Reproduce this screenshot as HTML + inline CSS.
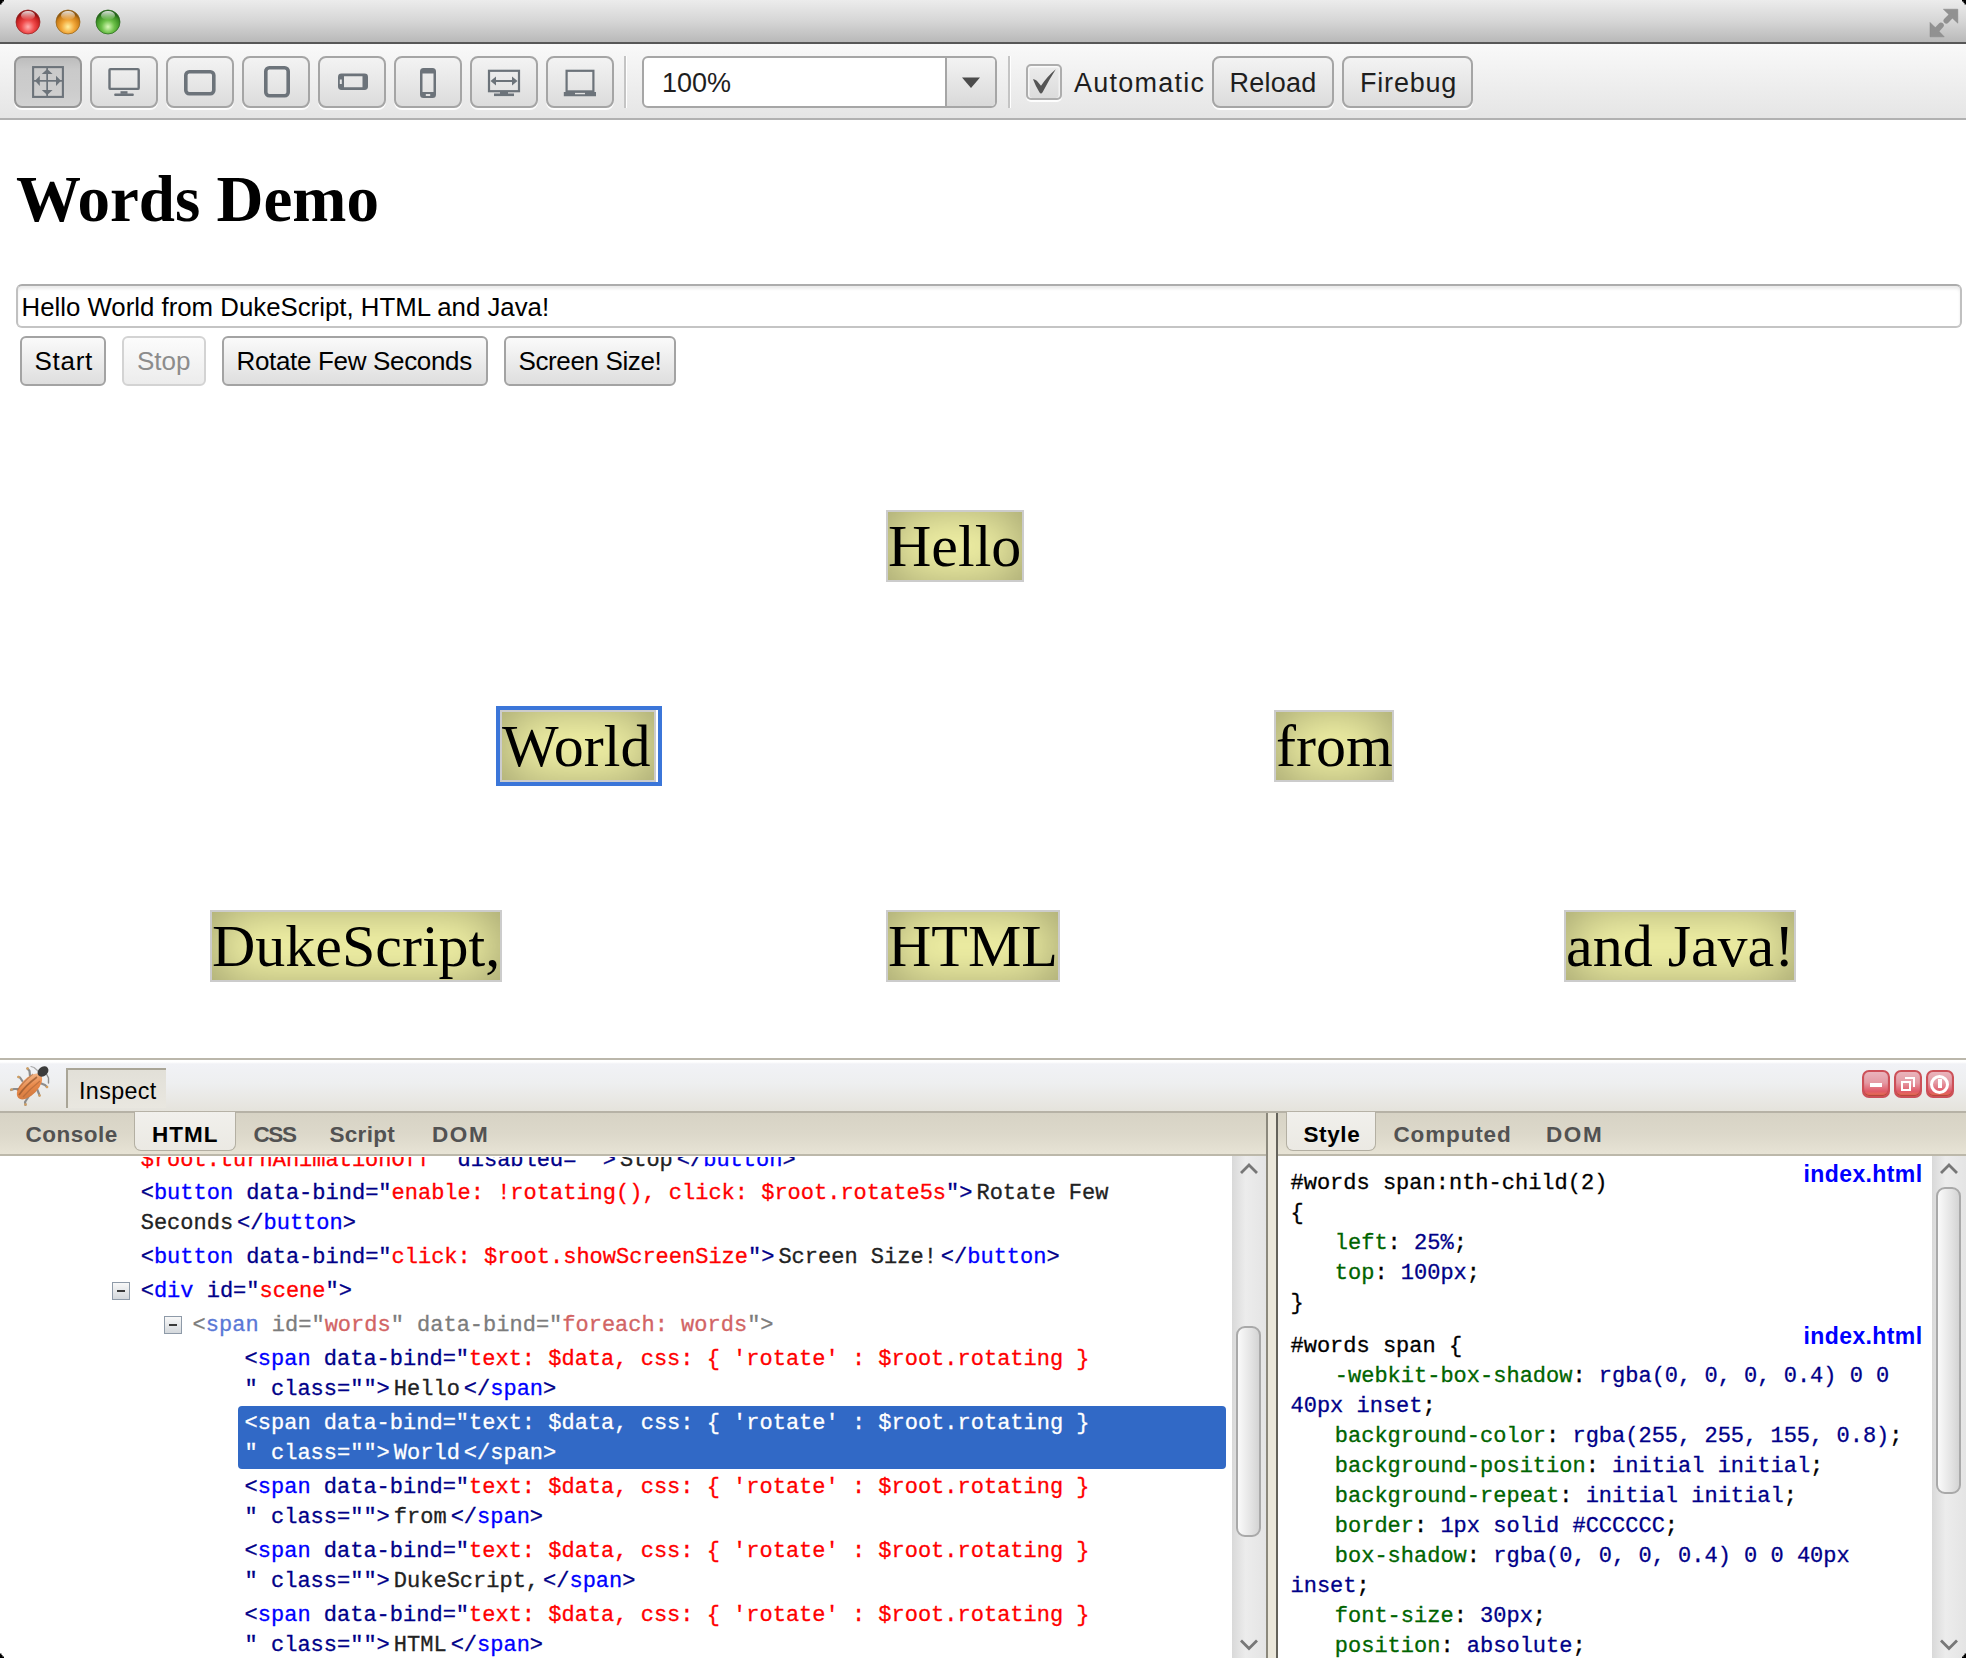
<!DOCTYPE html>
<html><head><meta charset="utf-8">
<style>
*{box-sizing:border-box;margin:0;padding:0}
html,body{width:1966px;height:1658px;overflow:hidden;background:#fff;font-family:"Liberation Sans",sans-serif;position:relative}
.a{position:absolute}
.t{position:absolute;white-space:pre;line-height:1}
/* title bar */
#title{left:0;top:0;width:1966px;height:42px;background:linear-gradient(#ececec,#d6d6d6 50%,#b9b9b9)}
#titleline{left:0;top:42px;width:1966px;height:2px;background:#575757}
.light{position:absolute;top:10px;width:24px;height:24px;border-radius:50%}
#toolbar{left:0;top:44px;width:1966px;height:74px;background:linear-gradient(#f9f9f9,#e5e5e5)}
#tbline{left:0;top:118px;width:1966px;height:2px;background:#b1b1b1}
.tbtn{position:absolute;top:56px;width:68px;height:52px;border:2px solid #a5a5a5;border-radius:8px;background:linear-gradient(#f3f3f3,#dcdcdc);box-shadow:0 2px 0 rgba(255,255,255,.9)}
.tbtn svg{position:absolute;left:0;top:0}
.tsep{position:absolute;top:56px;width:2px;height:52px;background:#c4c4c4;box-shadow:1px 0 0 #fff}
.tlab{font-size:27px;color:#1e1e1e}
/* page */
.pbtn{position:absolute;top:336px;height:50px;border:2px solid #a3a3a3;border-radius:6px;background:linear-gradient(#fafafa,#dedede)}
.ptxt{font-size:26px;color:#000}
.word{position:absolute;height:72px;border:2px solid #cccccc;background:rgba(255,255,155,.8);box-shadow:inset 0 0 56px rgba(0,0,0,.4);font-family:"Liberation Serif",serif;font-size:60px;line-height:68px;white-space:pre;color:#000}
/* firebug */
.mono{font-family:"Liberation Mono",monospace;font-size:22px;-webkit-text-stroke:.3px}
.tg{color:#0000ff}.br{color:#000088}.at{color:#000088}.vl{color:#ff0000}.tx{color:#222}
.pn{color:#006400}.pv{color:#000088}
.wh{color:#fff}.gbr{color:#7c7c7c}.gtg{color:#5a78d6}.gvl{color:#d26464}.sl{color:#000}
.tab{font-size:22.5px;font-weight:bold;color:#525252}
.rb{top:1070px;width:28px;height:28px;border-radius:7px;border:2px solid #cc5058;box-shadow:inset 0 -1px 1px rgba(120,30,30,.5);background:linear-gradient(#eab4bc,#e49aa4 45%,#e05a68 80%,#e87050)}
.sb{background:linear-gradient(90deg,#d9d9d9,#ececec 40%,#e4e4e4)}
.sth{border:2px solid #a9a9a9;border-radius:9px;background:linear-gradient(90deg,#fafafa,#e4e4e4 60%,#d4d4d4)}
.lnk{font-size:23px;font-weight:bold;color:#0000ff;letter-spacing:.28px}
</style></head><body>
<!-- title bar -->
<div class="a" id="title"></div>
<div class="a" id="titleline"></div>
<svg class="a" style="left:14px;top:8px" width="110" height="30" viewBox="0 0 110 30">
 <defs>
  <radialGradient id="gr" cx="50%" cy="70%" r="60%"><stop offset="0" stop-color="#ffb0b0"/><stop offset=".45" stop-color="#f04a4a"/><stop offset=".85" stop-color="#c41e1e"/><stop offset="1" stop-color="#8c1212"/></radialGradient>
  <radialGradient id="gy" cx="50%" cy="70%" r="60%"><stop offset="0" stop-color="#fff0a0"/><stop offset=".45" stop-color="#f2a83a"/><stop offset=".85" stop-color="#c87a14"/><stop offset="1" stop-color="#8a5510"/></radialGradient>
  <radialGradient id="gg" cx="50%" cy="70%" r="60%"><stop offset="0" stop-color="#d8f8b8"/><stop offset=".45" stop-color="#6cc048"/><stop offset=".85" stop-color="#3a8e22"/><stop offset="1" stop-color="#24601a"/></radialGradient>
  <linearGradient id="hl" x1="0" y1="0" x2="0" y2="1"><stop offset="0" stop-color="#fff" stop-opacity=".85"/><stop offset="1" stop-color="#fff" stop-opacity="0"/></linearGradient>
 </defs>
 <circle cx="14" cy="14" r="12" fill="url(#gr)" stroke="#9a2a2a" stroke-width=".8"/>
 <ellipse cx="14" cy="7.5" rx="7" ry="4.5" fill="url(#hl)"/>
 <circle cx="54" cy="14" r="12" fill="url(#gy)" stroke="#9a6a20" stroke-width=".8"/>
 <ellipse cx="54" cy="7.5" rx="7" ry="4.5" fill="url(#hl)"/>
 <circle cx="94" cy="14" r="12" fill="url(#gg)" stroke="#2e6e22" stroke-width=".8"/>
 <ellipse cx="94" cy="7.5" rx="7" ry="4.5" fill="url(#hl)"/>
</svg>
<svg class="a" style="left:0;top:0" width="6" height="6"><path d="M0 0 H4 V1.5 H2.5 V3 H1.5 V4.5 H0 Z" fill="#000"/></svg>
<svg class="a" style="left:1960px;top:0" width="6" height="6"><path d="M6 0 H2 V1.5 H3.5 V3 H4.5 V4.5 H6 Z" fill="#000"/></svg>
<svg class="a" style="left:1926px;top:6px" width="36" height="34" viewBox="0 0 36 34">
 <g fill="#919191" stroke="#858585" stroke-width=".5">
 <path d="M17.4 3.2 H31.8 V17.2 L27.3 13 L21.8 7.6 Z"/>
 <path d="M4 16.4 V30.8 H18.2 L13.9 26.2 L8.4 20.8 Z"/>
 </g>
 <g stroke="#919191" stroke-width="5.6" stroke-linecap="round"><path d="M24.6 10.4 L20.3 14.8"/><path d="M11.2 23.5 L15 19.4"/></g>
</svg>
<!-- toolbar -->
<div class="a" id="toolbar"></div>
<div class="a" id="tbline"></div>
<div class="tbtn" style="left:14px;background:linear-gradient(#bdbdbd,#cacaca 25%,#cdcdcd 70%,#d2d2d2);border-color:#979797"></div>
<div class="tbtn" style="left:90px"></div>
<div class="tbtn" style="left:166px"></div>
<div class="tbtn" style="left:242px"></div>
<div class="tbtn" style="left:318px"></div>
<div class="tbtn" style="left:394px"></div>
<div class="tbtn" style="left:470px"></div>
<div class="tbtn" style="left:546px"></div>
<svg class="a" style="left:0;top:0" width="640" height="120" viewBox="0 0 640 120" fill="#6c737a">
 <rect x="33.1" y="67.1" width="29.8" height="29.8" fill="none" stroke="#6c737a" stroke-width="2.1"/>
 <rect x="46.3" y="67" width="1.7" height="30"/><rect x="33" y="80" width="30" height="1.7"/>
 <path d="M47.2 69 L41.8 74 H52.6 Z M47.2 95 L41.8 90 H52.6 Z M35 80.8 L39.8 75.8 V86 Z M61 80.8 L56 75.8 V86 Z"/>
 <rect x="109.5" y="69.1" width="29.2" height="19.8" rx="1" fill="none" stroke="#6c737a" stroke-width="2.4"/>
 <rect x="120.5" y="91.2" width="7" height="2.6"/><rect x="114.2" y="93.6" width="19.6" height="2.4" rx="1"/>
 <rect x="185.8" y="71.8" width="28" height="22" rx="3.5" fill="none" stroke="#6c737a" stroke-width="3.6"/>
 <rect x="265.8" y="67.8" width="22.4" height="28" rx="3.5" fill="none" stroke="#6c737a" stroke-width="3.6"/>
 <path d="M338 77 Q338 73.6 341.5 73.6 H364.5 Q368 73.6 368 77 V86.6 Q368 90 364.5 90 H341.5 Q338 90 338 86.6 Z M344 76.3 V87.3 H362.5 V76.3 Z M339.8 79.5 V84 H341.8 V79.5 Z" fill-rule="evenodd"/>
 <path d="M423.5 68 H432.5 Q436 68 436 71.5 V94.5 Q436 98 432.5 98 H423.5 Q420 98 420 94.5 V71.5 Q420 68 423.5 68 Z M422.5 73.5 V92 H433.5 V73.5 Z M425.8 94 V96 H430.2 V94 Z" fill-rule="evenodd"/>
 <rect x="489" y="70.8" width="30" height="20.4" fill="none" stroke="#6c737a" stroke-width="2.2"/>
 <rect x="500" y="92" width="8" height="2"/><rect x="494" y="93.5" width="20" height="2.6"/>
 <rect x="495" y="80" width="18" height="2"/>
 <path d="M490.5 81 L496 76.5 V85.5 Z M517.5 81 L512 76.5 V85.5 Z"/>
 <rect x="566.6" y="70.8" width="26.8" height="20.6" fill="none" stroke="#6c737a" stroke-width="2.2"/>
 <path d="M563.8 92 H596 V96.2 H563.8 Z M575 92.8 V94.2 H585 V92.8 Z" fill-rule="evenodd"/>
</svg>

<div class="tsep" style="left:624px"></div>
<div class="a" style="left:642px;top:56px;width:355px;height:52px;border:2px solid #a6a6a6;border-radius:6px;background:#fff;overflow:hidden">
 <div class="a" style="left:301px;top:0;width:52px;height:48px;border-left:2px solid #a6a6a6;background:linear-gradient(#f3f3f3,#d9d9d9)"></div>
</div>
<svg class="a" style="left:960px;top:76px" width="22" height="14" viewBox="0 0 22 14"><path d="M2 1.5 H20 L11 12 Z" fill="#4b4b4b"/></svg>
<div class="t tlab" style="left:662px;top:70px">100%</div>
<div class="tsep" style="left:1008px"></div>
<div class="a" style="left:1026px;top:64px;width:36px;height:36px;border:2px solid #adadad;border-radius:5px;background:linear-gradient(#ececec,#dcdcdc);box-shadow:0 2px 0 rgba(255,255,255,.9),inset 0 1.5px 0 #fafafa,inset 1.5px 0 0 #f6f6f6,inset -1.5px 0 0 #f2f2f2"></div>
<svg class="a" style="left:1026px;top:60px" width="40" height="42" viewBox="0 0 40 42"><path d="M7 19.2 Q8.8 18.8 10.8 20.8 L15 25.8 Q21 16.5 29.8 9.2 Q23.5 19 16.6 32.2 Q15 34.6 13.4 32.2 Q9.8 26.5 7 19.2 Z" fill="#555"/></svg>
<div class="t tlab" style="left:1074px;top:70px;letter-spacing:1.25px">Automatic</div>
<div class="tbtn" style="left:1212px;width:122px"></div>
<div class="t tlab" style="left:1229.5px;top:70px;letter-spacing:.25px">Reload</div>
<div class="tbtn" style="left:1342px;width:131px"></div>
<div class="t tlab" style="left:1360px;top:70px;letter-spacing:.8px">Firebug</div>

<!-- page content -->
<div class="t" style="left:16px;top:166.5px;font-family:'Liberation Serif',serif;font-weight:bold;font-size:65px;color:#000">Words Demo</div>
<div class="a" style="left:16px;top:284px;width:1946px;height:44px;border:2px solid;border-color:#acacac #c0c0c0 #c4c4c4 #c0c0c0;border-radius:6px;background:#fff;box-shadow:inset 0 3px 3px rgba(0,0,0,.08)"></div>
<div class="t ptxt" style="left:21.5px;top:295px;font-size:25.8px">Hello World from DukeScript, HTML and Java!</div>
<div class="pbtn" style="left:20px;width:86px"></div>
<div class="t ptxt" style="left:34.5px;top:348px;letter-spacing:.7px">Start</div>
<div class="pbtn" style="left:122px;width:84px;border-color:#d3d3d3;background:linear-gradient(#fcfcfc,#ececec)"></div>
<div class="t ptxt" style="left:137px;top:348px;color:#8c8c8c">Stop</div>
<div class="pbtn" style="left:222px;width:266px"></div>
<div class="t ptxt" style="left:236.5px;top:348px;letter-spacing:-.33px">Rotate Few Seconds</div>
<div class="pbtn" style="left:504px;width:172px"></div>
<div class="t ptxt" style="left:518.5px;top:348px;letter-spacing:-.38px">Screen Size!</div>
<!-- words -->
<div class="word" style="left:886px;top:510px;width:138px">Hello</div>
<div class="a" style="left:496px;top:706px;width:166px;height:80px;border:4px solid #3b76d9"></div>
<div class="a" style="left:656px;top:710px;width:2px;height:72px;background:#fff"></div>
<div class="word" style="left:500px;top:710px;width:156px;overflow:visible">World</div>
<div class="word" style="left:1274px;top:710px;width:120px">from</div>
<div class="word" style="left:210px;top:910px;width:292px">DukeScript,</div>
<div class="word" style="left:886px;top:910px;width:174px">HTML</div>
<div class="word" style="left:1564px;top:910px;width:232px">and Java!</div>














<!-- firebug -->
<div class="a" style="left:0;top:1058px;width:1966px;height:2px;background:#bbb7ab"></div>
<div class="a" style="left:0;top:1060px;width:1966px;height:51px;background:linear-gradient(#ffffff 0,#ffffff 2px,#f1f2f6 4px,#eeeff0 45%,#e5e3dc)"></div>
<div class="a" style="left:0;top:1111px;width:1966px;height:2px;background:#b6b2a6"></div>
<div class="a" style="left:0;top:1113px;width:1966px;height:41px;background:linear-gradient(#d7d3c5,#dcd8ca 50%,#e7e3d5)"></div>
<div class="a" style="left:0;top:1154px;width:1966px;height:2px;background:#bcb8aa"></div>
<div class="a" style="left:0;top:1156px;width:1966px;height:502px;background:#fff"></div>
<div class="a" style="left:0;top:1156px;width:1232px;height:502px;overflow:hidden"><div class="a" style="left:0;top:-1156px;width:1232px;height:1658px"><div class="t mono" style="left:140.7px;top:1145.5px;line-height:30px"><span class="vl">$root.turnAnimationOff</span><span class="br">&quot;</span> <span class="at">disabled</span><span class="br">=&quot;&quot;&gt;</span><span class="tx" style="padding:0 4px">Stop</span><span class="br">&lt;/</span><span class="tg">button</span><span class="br">&gt;</span></div>
<div class="t mono" style="left:140.7px;top:1178.5px;line-height:30px"><span class="br">&lt;</span><span class="tg">button</span> <span class="at">data&#45;bind</span><span class="br">=&quot;</span><span class="vl">enable: !rotating(), click: $root.rotate5s</span><span class="br">&quot;&gt;</span><span class="tx" style="padding-left:4px">Rotate Few</span></div>
<div class="t mono" style="left:140.7px;top:1208.5px;line-height:30px"><span class="tx" style="padding-right:4px">Seconds</span><span class="br">&lt;/</span><span class="tg">button</span><span class="br">&gt;</span></div>
<div class="t mono" style="left:140.7px;top:1242.5px;line-height:30px"><span class="br">&lt;</span><span class="tg">button</span> <span class="at">data&#45;bind</span><span class="br">=&quot;</span><span class="vl">click: $root.showScreenSize</span><span class="br">&quot;&gt;</span><span class="tx" style="padding:0 4px">Screen Size!</span><span class="br">&lt;/</span><span class="tg">button</span><span class="br">&gt;</span></div>
<div class="t mono" style="left:140.7px;top:1276.5px;line-height:30px"><span class="br">&lt;</span><span class="tg">div</span> <span class="at">id</span><span class="br">=&quot;</span><span class="vl">scene</span><span class="br">&quot;&gt;</span></div>
<div class="t mono" style="left:192.6px;top:1310.5px;line-height:30px;opacity:1"><span class="gbr">&lt;</span><span class="gtg">span</span> <span class="gbr">id</span><span class="gbr">=&quot;</span><span class="gvl">words</span><span class="gbr">&quot;</span> <span class="gbr">data&#45;bind</span><span class="gbr">=&quot;</span><span class="gvl">foreach: words</span><span class="gbr">&quot;&gt;</span></div>
<div class="t mono" style="left:244.6px;top:1344.5px;line-height:30px"><span class="br">&lt;</span><span class="tg">span</span> <span class="at">data&#45;bind</span><span class="br">=&quot;</span><span class="vl">text: $data, css: { &#x27;rotate&#x27; : $root.rotating }</span></div>
<div class="t mono" style="left:244.6px;top:1374.5px;line-height:30px"><span class="br">&quot;</span> <span class="at">class</span><span class="br">=&quot;&quot;&gt;</span><span class="tx" style="padding:0 4px">Hello</span><span class="br">&lt;/</span><span class="tg">span</span><span class="br">&gt;</span></div>
<div class="a" style="left:238px;top:1406px;width:988px;height:63px;background:#3169c6;border-radius:4px"></div>
<div class="t mono" style="left:244.6px;top:1408.5px;line-height:30px;color:#fff"><span class="wh">&lt;</span><span class="wh">span</span> <span class="wh">data&#45;bind</span><span class="wh">=&quot;</span><span class="wh">text: $data, css: { &#x27;rotate&#x27; : $root.rotating }</span></div>
<div class="t mono" style="left:244.6px;top:1438.5px;line-height:30px;color:#fff"><span class="wh">&quot;</span> <span class="wh">class</span><span class="wh">=&quot;&quot;&gt;</span><span class="wh" style="padding:0 4px">World</span><span class="wh">&lt;/</span><span class="wh">span</span><span class="wh">&gt;</span></div>
<div class="t mono" style="left:244.6px;top:1472.5px;line-height:30px"><span class="br">&lt;</span><span class="tg">span</span> <span class="at">data&#45;bind</span><span class="br">=&quot;</span><span class="vl">text: $data, css: { &#x27;rotate&#x27; : $root.rotating }</span></div>
<div class="t mono" style="left:244.6px;top:1502.5px;line-height:30px"><span class="br">&quot;</span> <span class="at">class</span><span class="br">=&quot;&quot;&gt;</span><span class="tx" style="padding:0 4px">from</span><span class="br">&lt;/</span><span class="tg">span</span><span class="br">&gt;</span></div>
<div class="t mono" style="left:244.6px;top:1536.5px;line-height:30px"><span class="br">&lt;</span><span class="tg">span</span> <span class="at">data&#45;bind</span><span class="br">=&quot;</span><span class="vl">text: $data, css: { &#x27;rotate&#x27; : $root.rotating }</span></div>
<div class="t mono" style="left:244.6px;top:1566.5px;line-height:30px"><span class="br">&quot;</span> <span class="at">class</span><span class="br">=&quot;&quot;&gt;</span><span class="tx" style="padding:0 4px">DukeScript,</span><span class="br">&lt;/</span><span class="tg">span</span><span class="br">&gt;</span></div>
<div class="t mono" style="left:244.6px;top:1600.5px;line-height:30px"><span class="br">&lt;</span><span class="tg">span</span> <span class="at">data&#45;bind</span><span class="br">=&quot;</span><span class="vl">text: $data, css: { &#x27;rotate&#x27; : $root.rotating }</span></div>
<div class="t mono" style="left:244.6px;top:1630.5px;line-height:30px"><span class="br">&quot;</span> <span class="at">class</span><span class="br">=&quot;&quot;&gt;</span><span class="tx" style="padding:0 4px">HTML</span><span class="br">&lt;/</span><span class="tg">span</span><span class="br">&gt;</span></div>
<div class="a" style="left:112px;top:1282px;width:18px;height:18px;border:1.5px solid #8e9aa8;background:linear-gradient(#f8f8f8,#d4d8dc)"><div class="a" style="left:3.5px;top:6.5px;width:8px;height:2.5px;background:#3a3a3a"></div></div>
<div class="a" style="left:164px;top:1316px;width:18px;height:18px;border:1.5px solid #8e9aa8;background:linear-gradient(#f8f8f8,#d4d8dc)"><div class="a" style="left:3.5px;top:6.5px;width:8px;height:2.5px;background:#3a3a3a"></div></div></div></div>
<div class="a" style="left:0;top:1156px;width:1232px;height:1px;background:#fff"></div>
<div class="t mono" style="left:1290.5px;top:1168.5px;line-height:30px"><span class="sl">#words span:nth-child(2)</span></div>
<div class="t mono" style="left:1290.5px;top:1198.5px;line-height:30px"><span class="sl">{</span></div>
<div class="t mono" style="left:1334.8px;top:1228.5px;line-height:30px"><span class="pn">left</span><span class="sl">: </span><span class="pv">25%</span><span class="sl">;</span></div>
<div class="t mono" style="left:1334.8px;top:1258.5px;line-height:30px"><span class="pn">top</span><span class="sl">: </span><span class="pv">100px</span><span class="sl">;</span></div>
<div class="t mono" style="left:1290.5px;top:1288.5px;line-height:30px"><span class="sl">}</span></div>
<div class="t mono" style="left:1290.5px;top:1331.5px;line-height:30px"><span class="sl">#words span {</span></div>
<div class="t mono" style="left:1334.8px;top:1361.5px;line-height:30px"><span class="pn">-webkit-box-shadow</span><span class="sl">: </span><span class="pv">rgba(0, 0, 0, 0.4) 0 0</span></div>
<div class="t mono" style="left:1290.5px;top:1391.5px;line-height:30px"><span class="pv">40px inset</span><span class="sl">;</span></div>
<div class="t mono" style="left:1334.8px;top:1421.5px;line-height:30px"><span class="pn">background-color</span><span class="sl">: </span><span class="pv">rgba(255, 255, 155, 0.8)</span><span class="sl">;</span></div>
<div class="t mono" style="left:1334.8px;top:1451.5px;line-height:30px"><span class="pn">background-position</span><span class="sl">: </span><span class="pv">initial initial</span><span class="sl">;</span></div>
<div class="t mono" style="left:1334.8px;top:1481.5px;line-height:30px"><span class="pn">background-repeat</span><span class="sl">: </span><span class="pv">initial initial</span><span class="sl">;</span></div>
<div class="t mono" style="left:1334.8px;top:1511.5px;line-height:30px"><span class="pn">border</span><span class="sl">: </span><span class="pv">1px solid #CCCCCC</span><span class="sl">;</span></div>
<div class="t mono" style="left:1334.8px;top:1541.5px;line-height:30px"><span class="pn">box-shadow</span><span class="sl">: </span><span class="pv">rgba(0, 0, 0, 0.4) 0 0 40px</span></div>
<div class="t mono" style="left:1290.5px;top:1571.5px;line-height:30px"><span class="pv">inset</span><span class="sl">;</span></div>
<div class="t mono" style="left:1334.8px;top:1601.5px;line-height:30px"><span class="pn">font-size</span><span class="sl">: </span><span class="pv">30px</span><span class="sl">;</span></div>
<div class="t mono" style="left:1334.8px;top:1631.5px;line-height:30px"><span class="pn">position</span><span class="sl">: </span><span class="pv">absolute</span><span class="sl">;</span></div>
<!-- fbchrome -->
<div class="a" style="left:66px;top:1068px;width:100px;height:40px;border-top:2px solid #a9a597;border-left:2px solid #a9a597;background:linear-gradient(#e2e0d8,#e9e7e0)"></div>
<div class="t" style="left:79px;top:1079.5px;font-size:23.3px;color:#000;letter-spacing:.35px">Inspect</div>
<svg class="a" style="left:0;top:1058px" width="60" height="54" viewBox="0 0 60 54">
 <defs><linearGradient id="bug" x1="0" y1="1" x2="1" y2="0"><stop offset="0" stop-color="#c8743c"/><stop offset=".5" stop-color="#e8894a"/><stop offset="1" stop-color="#f6c6a0"/></linearGradient></defs>
 <g stroke="#8c8c8c" stroke-width="2.2" fill="none" stroke-linecap="round" stroke-linejoin="round">
  <path d="M30 18 L29.5 13 L27.5 10.5"/><path d="M23 24 L20 19.5 L18.5 19"/><path d="M20 31 L14 31 L11 32"/>
  <path d="M29 38 L25 44 L25.5 47"/><path d="M37 31 L39 36 L39.5 37.5"/><path d="M40 25 L45 27 L47 29"/>
  <path d="M38 13 L34 9.5 L31 8.5" stroke-width="1.2" stroke="#aaa"/><path d="M46 15 L48.5 20 L48.5 25" stroke-width="1.4"/>
 </g>
 <g fill="#d4a060"><circle cx="27.5" cy="10.5" r="1.3"/><circle cx="18.5" cy="19" r="1.3"/><circle cx="11.5" cy="31.5" r="1.3"/><circle cx="25.5" cy="46.5" r="1.3"/><circle cx="39.5" cy="37.5" r="1.3"/><circle cx="47" cy="29" r="1.3"/></g>
 <ellipse cx="29.5" cy="28.5" rx="16" ry="8.3" transform="rotate(-46 29.5 28.5)" fill="url(#bug)"/>
 <path d="M19 37 Q25 28 37 19" stroke="#9a5a30" stroke-width="1.6" fill="none" opacity=".8"/>
 <path d="M23 39 Q30 31 40 23" stroke="#a86438" stroke-width="1.2" fill="none" opacity=".6"/>
 <path d="M17 33 Q22 25 33 16" stroke="#a86438" stroke-width="1.2" fill="none" opacity=".6"/>
 <ellipse cx="43" cy="13.5" rx="6" ry="4.6" transform="rotate(-40 43 13.5)" fill="#3c3c3c"/>
</svg>
<!-- red buttons -->
<div class="a rb" style="left:1862px"></div><div class="a rb" style="left:1894px"></div><div class="a rb" style="left:1926px"></div>
<div class="a" style="left:1870px;top:1083px;width:12px;height:4px;background:#fff"></div>
<div class="a" style="left:1901px;top:1081px;width:10px;height:10px;border:2px solid #fff"></div>
<div class="a" style="left:1905px;top:1077px;width:10px;height:10px;border-top:2px solid #fff;border-right:2px solid #fff"></div>
<div class="a" style="left:1930px;top:1075px;width:19px;height:19px;border:3px solid #fff;border-radius:50%"></div>
<div class="a" style="left:1938px;top:1078.5px;width:3.5px;height:9px;background:#fff"></div>
<!-- tabs left -->
<div class="a" style="left:134px;top:1112px;width:102px;height:39px;border:1.5px solid #b3afa2;border-top:none;border-radius:0 0 7px 7px;background:linear-gradient(#f1f0ec,#ebe9e3)"></div>
<div class="t tab" style="left:25.5px;top:1123.5px;letter-spacing:.5px">Console</div>
<div class="t tab" style="left:152px;top:1123.5px;color:#000;letter-spacing:1px">HTML</div>
<div class="t tab" style="left:253.5px;top:1123.5px;letter-spacing:-1.4px">CSS</div>
<div class="t tab" style="left:329.5px;top:1123.5px;letter-spacing:.3px">Script</div>
<div class="t tab" style="left:432px;top:1123.5px;letter-spacing:1.6px">DOM</div>
<!-- splitter -->
<div class="a" style="left:1266px;top:1113px;width:2px;height:545px;background:#8b887c"></div>
<div class="a" style="left:1268px;top:1113px;width:8px;height:545px;background:#ebe7da"></div>
<div class="a" style="left:1276px;top:1113px;width:2px;height:545px;background:#64625a"></div>
<!-- tabs right -->
<div class="a" style="left:1286px;top:1112px;width:90px;height:39px;border:1.5px solid #b3afa2;border-top:none;border-radius:0 0 7px 7px;background:linear-gradient(#f1f0ec,#ebe9e3)"></div>
<div class="t tab" style="left:1303.5px;top:1123.5px;color:#000;letter-spacing:.6px">Style</div>
<div class="t tab" style="left:1393.5px;top:1123.5px;letter-spacing:.85px">Computed</div>
<div class="t tab" style="left:1546px;top:1123.5px;letter-spacing:1.6px">DOM</div>
<!-- scrollbars -->
<div class="a sb" style="left:1232px;top:1156px;width:34px;height:502px"></div>
<div class="a sth" style="left:1236px;top:1326px;width:25px;height:211px"></div>
<svg class="a" style="left:1238px;top:1160px" width="22" height="16"><path d="M3 13 L11 5 L19 13" stroke="#777" stroke-width="2.8" fill="none"/></svg>
<svg class="a" style="left:1238px;top:1636px" width="22" height="16"><path d="M3 4.5 L11 12.5 L19 4.5" stroke="#777" stroke-width="2.8" fill="none"/></svg>
<div class="a sb" style="left:1932px;top:1156px;width:34px;height:502px"></div>
<div class="a sth" style="left:1936px;top:1187px;width:25px;height:307px"></div>
<svg class="a" style="left:1938px;top:1160px" width="22" height="16"><path d="M3 13 L11 5 L19 13" stroke="#777" stroke-width="2.8" fill="none"/></svg>
<svg class="a" style="left:1938px;top:1636px" width="22" height="16"><path d="M3 4.5 L11 12.5 L19 4.5" stroke="#777" stroke-width="2.8" fill="none"/></svg>
<div class="t lnk" style="left:1803.5px;top:1163px;letter-spacing:.4px">index.html</div>
<div class="t lnk" style="left:1803.5px;top:1325px;letter-spacing:.4px">index.html</div>
<svg class="a" style="left:0;top:1652px" width="6" height="6"><path d="M0 6 H4 V4.5 H2.5 V3 H1.5 V1.5 H0 Z" fill="#000"/></svg>
<svg class="a" style="left:1960px;top:1652px" width="6" height="6"><path d="M6 6 H2 V4.5 H3.5 V3 H4.5 V1.5 H6 Z" fill="#000"/></svg>
</body></html>
